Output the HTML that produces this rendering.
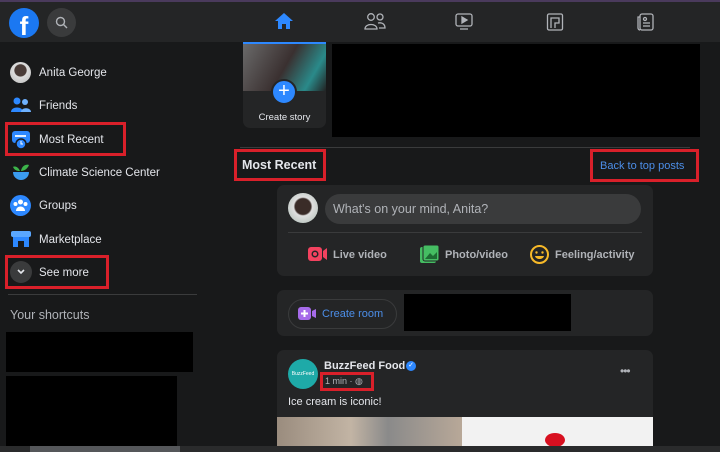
<!DOCTYPE html>
<html><head><meta charset="utf-8"><style>
*{margin:0;padding:0;box-sizing:border-box}
body{width:720px;height:452px;overflow:hidden;background:#18191a;font-family:"Liberation Sans",sans-serif;color:#e4e6eb;position:relative}
.a{position:absolute}
.red{position:absolute;border:3px solid #d9202a}
.item{position:absolute;left:39px;font-size:11.5px;color:#e4e6eb}
.card{position:absolute;background:#242526;border-radius:7px}
</style></head><body>
<div class="a" style="left:0;top:0;width:720px;height:42px;background:#242526;border-top:2px solid #4a3a5c"></div>
<div class="a" style="left:9px;top:8px;width:30px;height:30px;border-radius:50%;background:#1b78f2;color:#fff;font-weight:bold;font-size:26px;text-align:center;line-height:36px;overflow:hidden">f</div>
<div class="a" style="left:47px;top:8px;width:29px;height:29px;border-radius:50%;background:#3a3b3c"></div>
<svg class="a" style="left:55px;top:16px" width="13" height="13"><circle cx="5.5" cy="5.5" r="4" fill="none" stroke="#b0b3b8" stroke-width="1.4"/><line x1="8.5" y1="8.5" x2="12" y2="12" stroke="#b0b3b8" stroke-width="1.4"/></svg>
<svg class="a" style="left:274px;top:12px" width="20" height="18"><path d="M10 1 L19 9 H16 V17 H12 V12 H8 V17 H4 V9 H1 Z" fill="#2d88ff"/></svg>
<svg class="a" style="left:364px;top:12px" width="22" height="18" fill="none" stroke="#b0b3b8" stroke-width="1.3"><circle cx="7" cy="5" r="3.3"/><circle cx="16" cy="5" r="3"/><path d="M1 17 C1 11 13 11 13 17 Z"/><path d="M14 11 C19 10 21 13 21 16 H15"/></svg>
<svg class="a" style="left:454px;top:12px" width="20" height="20" fill="none" stroke="#b0b3b8" stroke-width="1.3"><rect x="2" y="2" width="16" height="12" rx="2"/><path d="M8 5 L13 8 L8 11Z" fill="#b0b3b8"/><line x1="6" y1="17" x2="14" y2="17"/></svg>
<svg class="a" style="left:546px;top:12px" width="18" height="20" fill="none" stroke="#b0b3b8" stroke-width="1.3"><rect x="1.5" y="2" width="15" height="16" rx="1.5"/><path d="M5 16 V6 H13 V11 H9 V16"/></svg>
<svg class="a" style="left:635px;top:12px" width="20" height="20" fill="none" stroke="#b0b3b8" stroke-width="1.3"><rect x="5" y="2" width="13" height="16" rx="2"/><path d="M5 5 H3 V16 C3 17 4 18 5 18"/><circle cx="10" cy="7" r="1.5"/><line x1="8" y1="11" x2="15" y2="11"/><line x1="8" y1="14" x2="15" y2="14"/></svg>

<!-- sidebar -->
<div class="a" style="left:10px;top:62px;width:21px;height:21px;border-radius:50%;background:radial-gradient(circle at 50% 40%,#4a3c38 35%,#ddd 40%,#bbb)"></div>
<div class="item" style="top:67px">Anita George</div>
<svg class="a" style="left:10px;top:96px" width="22" height="18"><circle cx="7" cy="5" r="3.5" fill="#2d88ff"/><circle cx="15" cy="6" r="3" fill="#6fb2ff"/><path d="M1 16 C1 10 13 10 13 16Z" fill="#2d88ff"/><path d="M11 16 C11 11 21 11 21 16Z" fill="#6fb2ff"/></svg>
<div class="item" style="top:100px">Friends</div>
<div class="red" style="left:5px;top:122px;width:121px;height:34px"></div>
<svg class="a" style="left:11px;top:130px" width="20" height="20"><rect x="1" y="1" width="18" height="12" rx="3" fill="#2d88ff"/><rect x="4" y="5" width="11" height="2" fill="#e0f0ff"/><circle cx="10" cy="14" r="5" fill="#2d88ff" stroke="#18191a" stroke-width="1.5"/><path d="M10 11 V14 H12" stroke="#fff" fill="none"/></svg>
<div class="item" style="top:134px">Most Recent</div>
<svg class="a" style="left:11px;top:162px" width="20" height="20"><path d="M9 9 C7 4 3 4 2 5 C4 9 7 9 9 9Z M10 9 C11 3 16 2 18 3 C16 8 12 9 10 9Z" fill="#3cb44a"/><path d="M2 10 H18 C18 15 14 18 10 18 C6 18 2 15 2 10Z" fill="#3b9cf0"/></svg>
<div class="item" style="top:167px">Climate Science Center</div>
<div class="a" style="left:10px;top:195px;width:21px;height:21px;border-radius:50%;background:#2d88ff"></div>
<svg class="a" style="left:12px;top:198px" width="17" height="14" fill="#fff"><circle cx="8.5" cy="4" r="2.5"/><circle cx="3.5" cy="6" r="2"/><circle cx="13.5" cy="6" r="2"/><path d="M4 13 C4 7 13 7 13 13Z"/></svg>
<div class="item" style="top:200px">Groups</div>
<svg class="a" style="left:10px;top:229px" width="22" height="20"><rect x="1" y="2" width="20" height="6" rx="2" fill="#5aa7ff"/><path d="M3 8 H19 V18 H14 V12 H8 V18 H3Z" fill="#2d88ff"/></svg>
<div class="item" style="top:234px">Marketplace</div>
<div class="red" style="left:5px;top:255px;width:104px;height:34px"></div>
<div class="a" style="left:10px;top:261px;width:22px;height:22px;border-radius:50%;background:#3a3b3c"></div>
<svg class="a" style="left:16px;top:268px" width="10" height="8"><path d="M2 2 L5 5 L8 2" stroke="#e4e6eb" stroke-width="1.6" fill="none"/></svg>
<div class="item" style="top:267px">See more</div>
<div class="a" style="left:8px;top:294px;width:189px;height:1px;background:#3a3b3c"></div>
<div class="a" style="left:10px;top:308px;font-size:12.5px;color:#b0b3b8">Your shortcuts</div>
<div class="a" style="left:6px;top:332px;width:187px;height:40px;background:#000"></div>
<div class="a" style="left:6px;top:376px;width:171px;height:70px;background:#000"></div>

<!-- stories -->
<div class="card" style="left:243px;top:42px;width:83px;height:86px;overflow:hidden;border-radius:0 0 7px 7px">
<div style="height:49px;background:linear-gradient(120deg,#6a6a6a,#3a3030 50%,#2a8a8a 80%,#222);border-top:2px solid #2d88ff"></div></div>
<div class="a" style="left:271px;top:79px;width:26px;height:26px;border-radius:50%;background:#2d88ff;border:2px solid #242526;color:#fff;font-size:20px;text-align:center;line-height:21px">+</div>
<div class="a" style="left:243px;top:112px;width:83px;text-align:center;font-size:9.5px;color:#e4e6eb">Create story</div>
<div class="a" style="left:332px;top:44px;width:368px;height:93px;background:#000"></div>
<div class="a" style="left:240px;top:147px;width:450px;height:1px;background:#3a3b3c"></div>

<div class="red" style="left:234px;top:149px;width:92px;height:32px"></div>
<div class="a" style="left:242px;top:158px;font-size:12.5px;font-weight:bold;color:#e4e6eb">Most Recent</div>
<div class="red" style="left:590px;top:149px;width:109px;height:33px"></div>
<div class="a" style="left:600px;top:160px;font-size:11px;color:#4c8ee8">Back to top posts</div>

<!-- composer -->
<div class="card" style="left:277px;top:185px;width:376px;height:91px"></div>
<div class="a" style="left:288px;top:193px;width:30px;height:30px;border-radius:50%;background:radial-gradient(circle at 50% 45%,#3a2c28 35%,#e0e0e0 42%,#a8b8b0)"></div>
<div class="a" style="left:325px;top:194px;width:316px;height:30px;border-radius:15px;background:#3a3b3c;color:#b0b3b8;font-size:12.5px;padding-left:8px;line-height:30px">What's on your mind, Anita?</div>
<div class="a" style="left:288px;top:232px;width:354px;height:1px;background:#3a3b3c"></div>
<svg class="a" style="left:308px;top:246px" width="20" height="16"><rect x="0" y="1" width="14" height="14" rx="3" fill="#f3425f"/><circle cx="7" cy="8" r="3.5" fill="#242526"/><circle cx="7" cy="8" r="2" fill="#f3425f"/><path d="M15 5 L19 2 V14 L15 11Z" fill="#f3425f"/></svg>
<div class="a" style="left:333px;top:249px;font-size:11px;font-weight:bold;color:#b0b3b8">Live video</div>
<svg class="a" style="left:420px;top:245px" width="20" height="19"><rect x="0" y="2" width="16" height="16" rx="2" fill="#45bd62"/><rect x="3" y="0" width="16" height="16" rx="2" fill="#45bd62" stroke="#242526"/><path d="M5 14 L10 8 L13 11 L17 7 V14Z" fill="#1e6b33"/></svg>
<div class="a" style="left:445px;top:249px;font-size:11px;font-weight:bold;color:#b0b3b8">Photo/video</div>
<svg class="a" style="left:530px;top:245px" width="19" height="19"><circle cx="9.5" cy="9.5" r="8.5" fill="none" stroke="#f7b928" stroke-width="2"/><circle cx="6.5" cy="7.5" r="1.2" fill="#f7b928"/><circle cx="12.5" cy="7.5" r="1.2" fill="#f7b928"/><path d="M5 11 H14 C13 15 6 15 5 11Z" fill="#f7b928"/></svg>
<div class="a" style="left:555px;top:249px;font-size:11px;font-weight:bold;color:#b0b3b8">Feeling/activity</div>

<!-- room -->
<div class="card" style="left:277px;top:290px;width:376px;height:46px"></div>
<div class="a" style="left:288px;top:299px;width:109px;height:30px;border-radius:15px;border:1px solid #3a3b3c"></div>
<svg class="a" style="left:298px;top:307px" width="19" height="14"><rect x="0" y="0" width="13" height="13" rx="3" fill="#a66bea"/><path d="M6.5 3 V10 M3 6.5 H10" stroke="#fff" stroke-width="2"/><path d="M14 4 L18 2 V11 L14 9Z" fill="#a66bea"/></svg>
<div class="a" style="left:322px;top:308px;font-size:11px;color:#4c8ee8">Create room</div>
<div class="a" style="left:404px;top:294px;width:167px;height:37px;background:#000"></div>

<!-- post -->
<div class="card" style="left:277px;top:350px;width:376px;height:102px;border-radius:7px 7px 0 0"></div>
<div class="a" style="left:288px;top:359px;width:30px;height:30px;border-radius:50%;background:#1eaaa8;color:#fff;font-size:5px;text-align:center;line-height:30px">BuzzFeed</div>
<div class="a" style="left:324px;top:360px;font-size:11px;font-weight:bold;color:#e4e6eb">BuzzFeed Food</div>
<div class="a" style="left:406px;top:361px;width:10px;height:10px;border-radius:50%;background:#2d88ff;color:#fff;font-size:7px;text-align:center;line-height:10px">✓</div>
<div class="red" style="left:320px;top:372px;width:54px;height:19px"></div>
<div class="a" style="left:325px;top:376px;font-size:9px;color:#b0b3b8">1 min · ◍</div>
<div class="a" style="left:620px;top:364px;font-size:12px;color:#b0b3b8;letter-spacing:-1px">•••</div>
<div class="a" style="left:288px;top:396px;font-size:11px;color:#e4e6eb">Ice cream is iconic!</div>
<div class="a" style="left:277px;top:417px;width:185px;height:29px;background:linear-gradient(90deg,#9a8c7e,#c2b4a4 40%,#8a8a8a 60%,#b8a898)"></div>
<div class="a" style="left:462px;top:417px;width:191px;height:29px;background:#f2f2f2"></div>
<div class="a" style="left:545px;top:433px;width:20px;height:14px;border-radius:50%;background:#d81020"></div>
<div class="a" style="left:0;top:446px;width:720px;height:6px;background:#2a2b2c"></div>
<div class="a" style="left:30px;top:446px;width:150px;height:6px;background:#55575a"></div>
</body></html>
